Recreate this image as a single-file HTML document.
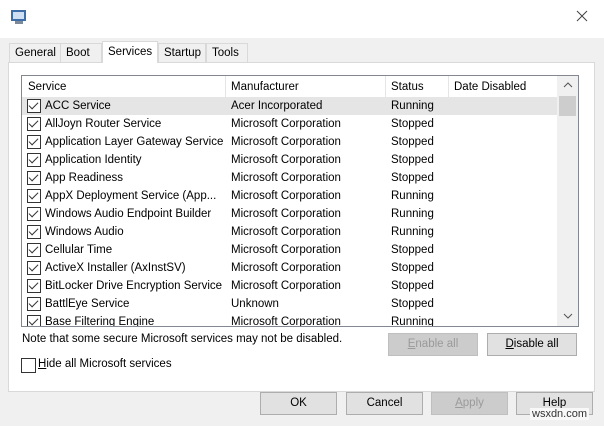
<!DOCTYPE html><html><head><style>
body{margin:0;width:604px;height:426px;background:#f0f0f0;font-family:"Liberation Sans",sans-serif;font-size:11.5px;color:#000;position:relative;overflow:hidden}
.a{position:absolute}
.top{left:0;top:0;width:604px;height:38px;background:#fff}
.tab{top:43px;height:19px;background:#f0f0f0;border:1px solid #d9d9d9;border-bottom:none;line-height:19px;padding:0 5px;box-sizing:border-box}
.panel{left:8px;top:62px;width:587px;height:330px;background:#fff;border:1px solid #d9d9d9;box-sizing:border-box}
.lv{left:21px;top:75px;width:558px;height:252px;border:1px solid #828790;box-sizing:border-box;background:#fff;overflow:hidden}
.row{position:absolute;left:0;width:535px;height:18px;line-height:18px}
.row span{position:absolute}
.cb{position:absolute;left:5px;top:2px;width:12px;height:12px;border:1px solid #333;background:#fff}
.cb:after{content:"";position:absolute;left:3px;top:0px;width:4px;height:8px;border:solid #333;border-width:0 1px 1px 0;transform:rotate(45deg)}
.btn{height:23px;border:1px solid #adadad;background:#e1e1e1;box-sizing:border-box;text-align:center;line-height:21px}
.dis{color:#9a9a9a;border-color:#bfbfbf;background:#cccccc}
.sep{position:absolute;top:0;width:1px;height:22px;background:#e5e5e5}
</style></head><body>
<div class="a top"></div>
<svg class="a" style="left:10px;top:8px" width="18" height="18"><rect x="1" y="2" width="15" height="11" fill="#3d6ea8"/><rect x="3" y="4" width="11" height="7" fill="#cfe0f3"/><rect x="5" y="13" width="8" height="3" fill="#7d8a99"/></svg>
<svg class="a" style="left:576px;top:10px" width="12" height="12"><path d="M1 1L11 11M11 1L1 11" stroke="#444" stroke-width="1"/></svg>
<div class="a tab" style="left:9px;width:52px">General</div>
<div class="a tab" style="left:60px;width:42px">Boot</div>
<div class="a tab" style="left:102px;top:41px;height:22px;width:56px;background:#fff;z-index:2;line-height:20px">Services</div>
<div class="a tab" style="left:158px;width:48px">Startup</div>
<div class="a tab" style="left:206px;width:42px">Tools</div>
<div class="a panel"></div>
<div class="a lv">
<div class="sep" style="left:203px"></div><div class="sep" style="left:363px"></div><div class="sep" style="left:426px"></div>
<div class="row" style="top:2px"><span style="left:6px">Service</span><span style="left:209px">Manufacturer</span><span style="left:369px">Status</span><span style="left:432px">Date Disabled</span></div>
<div class="row" style="top:21px;background:#e5e5e5"><div class="cb"></div><span style="left:23px">ACC Service</span><span style="left:209px">Acer Incorporated</span><span style="left:369px">Running</span></div>
<div class="row" style="top:39px"><div class="cb"></div><span style="left:23px">AllJoyn Router Service</span><span style="left:209px">Microsoft Corporation</span><span style="left:369px">Stopped</span></div>
<div class="row" style="top:57px"><div class="cb"></div><span style="left:23px">Application Layer Gateway Service</span><span style="left:209px">Microsoft Corporation</span><span style="left:369px">Stopped</span></div>
<div class="row" style="top:75px"><div class="cb"></div><span style="left:23px">Application Identity</span><span style="left:209px">Microsoft Corporation</span><span style="left:369px">Stopped</span></div>
<div class="row" style="top:93px"><div class="cb"></div><span style="left:23px">App Readiness</span><span style="left:209px">Microsoft Corporation</span><span style="left:369px">Stopped</span></div>
<div class="row" style="top:111px"><div class="cb"></div><span style="left:23px">AppX Deployment Service (App...</span><span style="left:209px">Microsoft Corporation</span><span style="left:369px">Running</span></div>
<div class="row" style="top:129px"><div class="cb"></div><span style="left:23px">Windows Audio Endpoint Builder</span><span style="left:209px">Microsoft Corporation</span><span style="left:369px">Running</span></div>
<div class="row" style="top:147px"><div class="cb"></div><span style="left:23px">Windows Audio</span><span style="left:209px">Microsoft Corporation</span><span style="left:369px">Running</span></div>
<div class="row" style="top:165px"><div class="cb"></div><span style="left:23px">Cellular Time</span><span style="left:209px">Microsoft Corporation</span><span style="left:369px">Stopped</span></div>
<div class="row" style="top:183px"><div class="cb"></div><span style="left:23px">ActiveX Installer (AxInstSV)</span><span style="left:209px">Microsoft Corporation</span><span style="left:369px">Stopped</span></div>
<div class="row" style="top:201px"><div class="cb"></div><span style="left:23px">BitLocker Drive Encryption Service</span><span style="left:209px">Microsoft Corporation</span><span style="left:369px">Stopped</span></div>
<div class="row" style="top:219px"><div class="cb"></div><span style="left:23px">BattlEye Service</span><span style="left:209px">Unknown</span><span style="left:369px">Stopped</span></div>
<div class="row" style="top:237px"><div class="cb"></div><span style="left:23px">Base Filtering Engine</span><span style="left:209px">Microsoft Corporation</span><span style="left:369px">Running</span></div>
<div style="position:absolute;left:535px;top:0;width:21px;height:250px;background:#f0f0f0"></div>
<div style="position:absolute;left:537px;top:20px;width:17px;height:20px;background:#cdcdcd"></div>
<svg style="position:absolute;left:541px;top:6px" width="10" height="6"><path d="M1 5L5 1L9 5" stroke="#555" fill="none"/></svg>
<svg style="position:absolute;left:541px;top:237px" width="10" height="6"><path d="M1 1L5 5L9 1" stroke="#555" fill="none"/></svg>
</div>
<div class="a" style="left:22px;top:332px;line-height:14px">Note that some secure Microsoft services may not be disabled.</div>
<div class="a btn dis" style="left:388px;top:333px;width:90px"><u>E</u>nable all</div>
<div class="a btn" style="left:487px;top:333px;width:90px"><u>D</u>isable all</div>
<div class="a" style="left:21px;top:358px;width:13px;height:13px;border:1px solid #333;background:#fff"></div>
<div class="a" style="left:38px;top:358px"><u>H</u>ide all Microsoft services</div>
<div class="a btn" style="left:260px;top:392px;width:77px">OK</div>
<div class="a btn" style="left:346px;top:392px;width:77px">Cancel</div>
<div class="a btn dis" style="left:431px;top:392px;width:77px"><u>A</u>pply</div>
<div class="a btn" style="left:516px;top:392px;width:77px">Help</div>
<div class="a" style="left:530px;top:408px;font-size:11px;color:#333;background:#f8f8f8;padding:0 2px">wsxdn.com</div>
</body></html>
